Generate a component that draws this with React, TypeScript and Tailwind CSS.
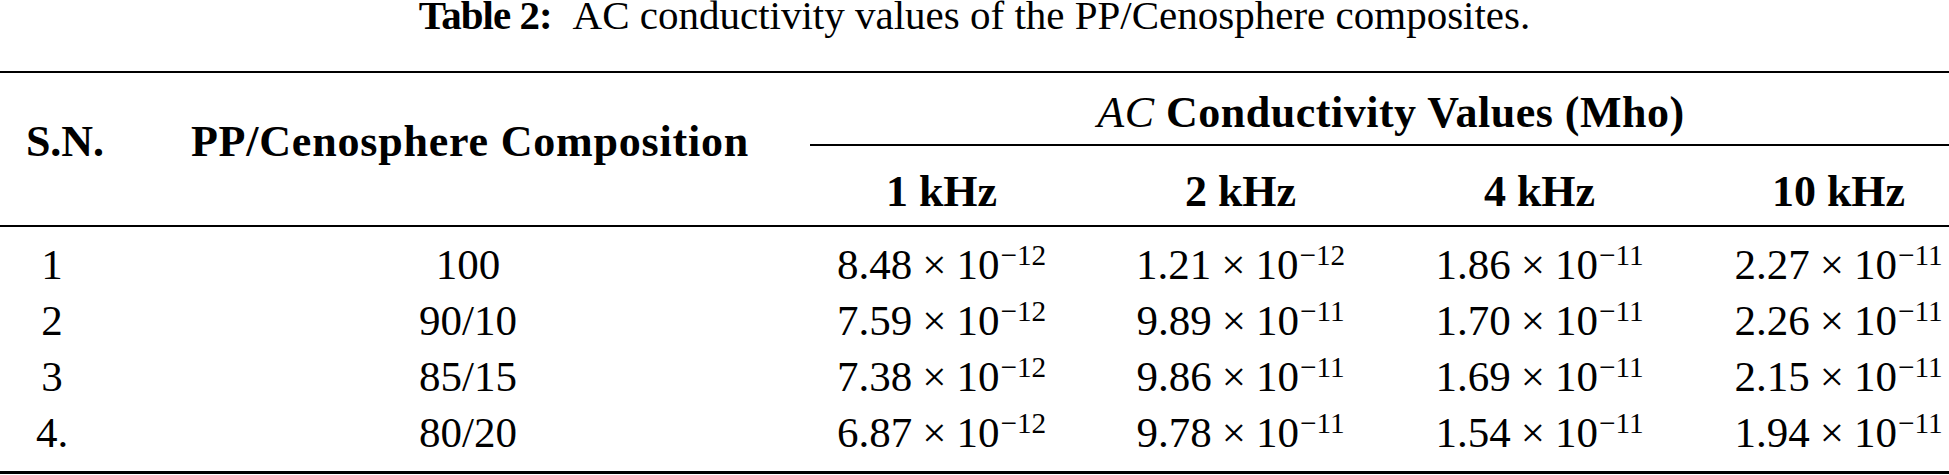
import React from "react";

type Val = { m: string; e: string };

const rows: { sn: string; comp: string; vals: Val[] }[] = [
  { sn: "1", comp: "100", vals: [{ m: "8.48", e: "12" }, { m: "1.21", e: "12" }, { m: "1.86", e: "11" }, { m: "2.27", e: "11" }] },
  { sn: "2", comp: "90/10", vals: [{ m: "7.59", e: "12" }, { m: "9.89", e: "11" }, { m: "1.70", e: "11" }, { m: "2.26", e: "11" }] },
  { sn: "3", comp: "85/15", vals: [{ m: "7.38", e: "12" }, { m: "9.86", e: "11" }, { m: "1.69", e: "11" }, { m: "2.15", e: "11" }] },
  { sn: "4.", comp: "80/20", vals: [{ m: "6.87", e: "12" }, { m: "9.78", e: "11" }, { m: "1.54", e: "11" }, { m: "1.94", e: "11" }] },
];

const freqs = ["1 kHz", "2 kHz", "4 kHz", "10 kHz"];

function Sci({ v }: { v: Val }) {
  return (
    <span className="whitespace-nowrap">
      {v.m}
      <span className="mx-[10px]">×</span>
      10
      <sup className="text-[0.68em] top-[-14px] ml-[1px]">−{v.e}</sup>
    </span>
  );
}

export default function App() {
  return (
    <div
      className="w-[1949px] h-[475px] overflow-hidden bg-white text-black"
      style={{ fontFamily: '"Liberation Serif", "Times New Roman", serif' }}
    >
      {/* Caption */}
      <div className="w-[1949px] h-[71px] text-center text-[41px] leading-[31px] whitespace-nowrap">
        <span className="font-bold tracking-[-1px]">Table 2:</span>
        <span className="inline-block w-[21px]"></span>
        AC conductivity values of the PP/Cenosphere composites.
      </div>

      {/* Table */}
      <div className="w-[1990px]">
        <div className="border-t-2 border-black"></div>

        {/* Header */}
        <div className="flex h-[152px] font-bold text-[44px] leading-[44px]">
          <div className="w-[140px] pt-[47px] pr-[10px] text-center">S.N.</div>
          <div className="w-[652px] pt-[47px] pl-[8px] text-center whitespace-nowrap tracking-[0.8px]">
            PP/Cenosphere Composition
          </div>
          <div className="flex-1 flex flex-col">
            <div className="h-[71px] pt-[18px] text-center whitespace-nowrap tracking-[0.5px]">
              <span className="italic font-normal">AC</span> Conductivity Values (Mho)
            </div>
            <div className="ml-[18px] border-t-2 border-black"></div>
            <div className="flex h-[79px] pt-[24px]">
              {freqs.map((f) => (
                <div key={f} className="w-[299px] text-center whitespace-nowrap">
                  {f}
                </div>
              ))}
            </div>
          </div>
        </div>

        <div className="border-t-2 border-black"></div>

        {/* Body */}
        <div className="pt-[10px] pb-[10px] text-[43px] leading-[56px]">
          {rows.map((r) => (
            <div key={r.sn} className="flex h-[56px]">
              <div className="w-[140px] pr-[36px] text-center">{r.sn}</div>
              <div className="w-[652px] pl-[4px] text-center">{r.comp}</div>
              {r.vals.map((v, i) => (
                <div key={i} className="w-[299px] text-center">
                  <Sci v={v} />
                </div>
              ))}
            </div>
          ))}
        </div>

        <div className="border-t-[3px] border-black"></div>
      </div>
    </div>
  );
}
